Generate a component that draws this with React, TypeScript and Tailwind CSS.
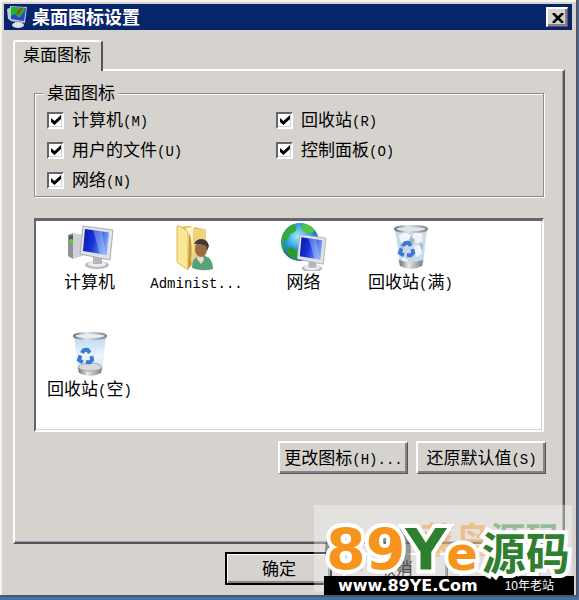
import { useState } from 'react';
import type { ReactNode } from 'react';
import clsx from 'clsx';

const raised =
  'border-t-2 border-l-2 border-r border-b border-t-white border-l-white border-r-[#55545a] border-b-[#55545a] shadow-[inset_-2px_-2px_0_#84838a] bg-[#d6d3ce]';

// Latin characters are half the width of a Chinese character
function Mixed({ text }: { text: string }) {
  return (
    <>
      {text.split(/([\x20-\x7e]+)/).map((part, i) =>
        i % 2 === 1 ? (
          <span key={i} className="text-[14px]">{part}</span>
        ) : (
          part
        )
      )}
    </>
  );
}

function Recycle() {
  return (
    <g fill="none" stroke="#3a79d6" strokeWidth="5">
      <path d="M18 23 q2 -5 7 -4 l3 4" />
      <path d="M16 26 l-2 6 5 3" />
      <path d="M30 27 l1 5 -3 3 h-5" />
    </g>
  );
}

function Monitor() {
  return (
    <g>
      <ellipse cx="31" cy="42" rx="12" ry="4" fill="#b9bbc0" />
      <ellipse cx="31" cy="41" rx="9" ry="3" fill="#eceded" />
      <path d="M27 34 l9 1 v6 h-9z" fill="#b4b6bc" />
      <path d="M17 3 L47 7 L44 37 L14 31z" fill="#dfe2e6" stroke="#a9adb5" />
      <path d="M19 6 L43 9.500 L40.500 32 L17 28z" fill="url(#screen)" />
      <path d="M27 7 L36 8.500 L40 32 L34 31z" fill="#b8d0ff" opacity=".4" />
    </g>
  );
}

function ComputerIcon() {
  return (
    <svg viewBox="0 0 48 48" className="size-12">
      <defs>
        <linearGradient id="screen" x1="0" y1="0" x2="1" y2="0.300">
          <stop offset="0" stopColor="#0712a8" />
          <stop offset=".5" stopColor="#1736d8" />
          <stop offset="1" stopColor="#7aa2f2" />
        </linearGradient>
      </defs>
      <path d="M2 12 l5 -2 v26 l-5 -3z" fill="#8d9096" />
      <path d="M7 10 l12 2 v20 l-12 4z" fill="#cfd1d5" />
      <path d="M3 13 l4 -1 v5 l-4 1z" fill="#53565c" />
      <circle cx="5" cy="18" r="2" fill="#49e21c" />
      <Monitor />
    </svg>
  );
}

function UserFolderIcon() {
  return (
    <svg viewBox="0 0 48 48" className="size-12">
      <path d="M6 4 l9 -1 17 3 v34 l-16 3z" fill="#e6bd54" />
      <path d="M13 5 l8 -1 v32 l-6 5z" fill="#fff6cf" />
      <path d="M20 6 h11 q2 0 2 2 v30 l-14 3z" fill="#f0d27c" />
      <path d="M4 4 q0 -2 2 -1 l7 4 q2 1 2 4 v36 l-10 -7 q-1 -1 -1 -3z" fill="#fae798" stroke="#dcb855" />
      <path d="M16 10 q4 7 2 33 l-3 3z" fill="#c89a35" />
      <path d="M19 45 q0 -11 8 -12 h5 q8 2 8 13 q-10 3 -21 -1z" fill="#55a37b" />
      <path d="M24 33 h6 l1 4 -3 4 -4 -5z" fill="#ead9c6" />
      <ellipse cx="28" cy="26" rx="6" ry="8" fill="#9c6a45" />
      <path d="M21 21 q2 -5 8 -5 q6 1 7 7 l-2 5 -1 -5 q-6 -3 -12 -2z" fill="#3d3a38" />
    </svg>
  );
}

function NetworkIcon() {
  return (
    <svg viewBox="0 0 48 48" className="size-12">
      <defs>
        <radialGradient id="globe" cx=".45" cy=".35" r=".65">
          <stop offset="0" stopColor="#a5eef8" />
          <stop offset=".5" stopColor="#2d9cdf" />
          <stop offset="1" stopColor="#124fae" />
        </radialGradient>
      </defs>
      <circle cx="20" cy="19" r="19" fill="url(#globe)" />
      <path d="M2 14 q3 -9 11 -13 l4 3 -2 5 -5 2 -2 5 -5 3 2 5 -1 6 q-3 -6 -2 -16z" fill="#35a936" />
      <path d="M5 27 l7 -3 6 5 -2 8 q-8 -2 -11 -10z" fill="#2c9b2c" />
      <path d="M23 1 q9 1 12 7 l-5 3 -6 -2 -3 -4z" fill="#54c43c" />
      <g transform="translate(5 9) scale(.87)">
        <Monitor />
      </g>
    </svg>
  );
}

function BinIcon({ full }: { full?: boolean }) {
  return (
    <svg viewBox="0 0 48 48" className="size-12">
      <defs>
        <linearGradient id="glass" x1="0" y1="0" x2="0" y2="1">
          <stop offset="0" stopColor="#b9d6ef" />
          <stop offset=".5" stopColor="#eaf5fd" />
          <stop offset="1" stopColor="#d3dbe3" />
        </linearGradient>
        <linearGradient id="metal">
          <stop offset="0" stopColor="#6d6f73" />
          <stop offset=".4" stopColor="#e6e7e9" />
          <stop offset="1" stopColor="#7b7d80" />
        </linearGradient>
      </defs>
      <path d="M8 6 L12 42 Q24 48 36 42 L40 6z" fill="url(#glass)" />
      {full && (
        <g>
          <path d="M9 9 l10 -4 8 2 9 -1 3 4 -3 32 -10 3 -12 -3z" fill="#c9d9e8" />
          <path d="M12 13 l6 -5 6 5 -3 7 -7 1z M27 9 l8 1 1 8 -6 3 -5 -5z M27 23 l6 -1 2 9 -6 3z M15 34 l6 3 -1 5 -5 -1z" fill="#eff5fa" />
          <path d="M24 13 l4 4 -3 5 -4 -3z M32 20 l4 1 -1 6z M13 20 l4 3 -3 4z" fill="#9fb7cf" />
        </g>
      )}
      <path d="M12 37 Q24 41 36 37 L35 43 Q24 49 13 43z" fill="url(#metal)" />
      {!full && <ellipse cx="24" cy="37" rx="11.500" ry="4" fill="#d9dadc" stroke="#a5a7aa" />}
      <ellipse cx="24" cy="6" rx="16" ry="3" fill={full ? '#dce6ee' : '#e3eff9'} stroke="url(#metal)" strokeWidth="2" />
      <g transform="translate(2 5) scale(.78)">
        <Recycle />
      </g>
    </svg>
  );
}

function TitleIcon() {
  return (
    <svg viewBox="0 0 20 24" className="h-6 w-5 shrink-0">
      <path d="M3 2 h5 v13 h-6z" fill="#9da1a8" />
      <path d="M0 4 l5 -2 v13 l-4 -1z" fill="#c8cbd0" />
      <path d="M3 1 L20 2 L18 18 L3 16z" fill="#b9c2d8" />
      <path d="M4 2 L19 3 L17 16 L4 14z" fill="#2547c8" />
      <path d="M4 2 L18 3 L17 7 L12 13 L8 9 L4 11z" fill="#1eb52c" />
      <path d="M10 9 l5 -6" stroke="#d02a2a" strokeWidth="2" />
      <path d="M8 16 h6 v4 h-6z" fill="#9a9da4" />
      <ellipse cx="11" cy="20" rx="6" ry="3" fill="#dfe0e2" />
    </svg>
  );
}

function CheckField({ label }: { label: string }) {
  const [checked, setChecked] = useState(true);

  return (
    <label className="flex h-[30px] items-center gap-2">
      <span className="grid size-[17px] place-items-center">
        <input
          type="checkbox"
          checked={checked}
          onChange={(e) => setChecked(e.target.checked)}
          className="col-start-1 row-start-1 size-[17px] appearance-none border-2 border-t-[#66656a] border-l-[#66656a] border-r-white border-b-white bg-white shadow-[inset_-1px_-1px_0_#d6d3ce]"
        />
        {checked && (
          <svg viewBox="0 0 10 10" className="pointer-events-none col-start-1 row-start-1 size-[10px]">
            <path d="M0 3 L3.500 6 L10 0 V4 L3.500 10 L0 7z" fill="#000" />
          </svg>
        )}
      </span>
      <span className="pt-1"><Mixed text={label} /></span>
    </label>
  );
}

function DialogButton({ children, framed, className }: { children: ReactNode; framed?: boolean; className?: string }) {
  return (
    <button
      type="button"
      className={clsx('flex items-center justify-center pt-1 whitespace-nowrap', raised, framed && 'outline-2 -outline-offset-1 outline-black', className)}
    >
      <span>{children}</span>
    </button>
  );
}

const items = [
  { label: '计算机', icon: <ComputerIcon /> },
  { label: 'Administ...', icon: <UserFolderIcon /> },
  { label: '网络', icon: <NetworkIcon /> },
  { label: '回收站(满)', icon: <BinIcon full /> },
  { label: '回收站(空)', icon: <BinIcon /> },
];

function Watermark() {
  return (
    <div className="pointer-events-none absolute right-0 bottom-0 h-[90px] w-[262px] font-['DejaVu_Sans','Noto_Sans_CJK_SC',sans-serif] font-bold">
      <div className="absolute top-0 left-0 h-[87px] w-[258px] bg-white/35" />
      <div className="absolute top-4 left-2 flex items-start gap-1 whitespace-nowrap opacity-50">
        <span className="text-[60px] leading-[60px] text-[#44433f]">CN</span>
        <span className="text-[35px] leading-[40px] text-[#f3a136]">菜鸟</span>
        <span className="-ml-1 text-[35px] leading-[40px] text-[#4b9a55]">源码</span>
      </div>
      <div className="absolute right-[2px] bottom-0 flex h-[19px] w-[250px] items-center justify-between bg-black pr-5 pl-[14px] text-white">
        <span className="text-[16px]">www.89YE.Com</span>
        <span className="font-['Liberation_Sans','Noto_Sans_CJK_SC',sans-serif] text-[12px] font-normal">10年老站</span>
      </div>
      <div className="absolute bottom-3 left-3 flex items-baseline leading-[56px] whitespace-nowrap [-webkit-text-stroke:8px_white] [paint-order:stroke_fill]">
        <span className="text-[57px] text-[#f7941d]">89</span>
        <span className="text-[57px] text-[#2e802e]">Y</span>
        <span className="text-[46px] text-[#f7941d]">e</span>
        <span className="pl-1 text-[44px] text-[#2e802e]">源码</span>
      </div>
    </div>
  );
}

export default function App() {
  return (
    <div className="min-h-screen bg-[#3c72b0] pr-px pb-[3px] font-['Liberation_Mono','Noto_Sans_CJK_SC',monospace] text-[17px] leading-5 text-black">
      <div className="relative border-r-2 border-b-2 border-r-[#55545a] border-b-[#55545a] bg-[#d6d3ce] p-1 pb-[11px] shadow-[inset_2px_2px_0_#f4f3f0]">
        <header className="flex h-[26px] items-center gap-[5px] bg-[#08246b] pr-1 pl-[3px] text-white">
          <TitleIcon />
          <h1 className="flex-1 pt-[3px] text-[18px] font-bold">桌面图标设置</h1>
          <button type="button" aria-label="关闭" className={clsx('flex h-5 w-[22px] items-center justify-center', raised)}>
            <svg viewBox="0 0 12 10" className="h-[10px] w-3">
              <path d="M1 0 L11 10 M11 0 L1 10" stroke="#000" strokeWidth="2.500" />
            </svg>
          </button>
        </header>

        <main className="pt-[10px] pr-[7px] pl-[9px]">
          <button
            type="button"
            className="relative -mb-[2px] block h-[31px] rounded-t-[3px] border-t-2 border-r-2 border-l-2 border-t-white border-r-[#55545a] border-l-white bg-[#d6d3ce] pr-[10px] pl-2"
          >
            桌面图标
          </button>

          <section className="border-2 border-t-white border-r-[#55545a] border-b-[#55545a] border-l-white px-[19px] pt-[10px] pb-[68px] shadow-[inset_-1px_-1px_0_#a09f9f]">
            <fieldset className="border border-[#8c8b8f] pb-px pl-3 shadow-[1px_1px_0_#fff,inset_1px_1px_0_#fff]">
              <legend className="-ml-1 h-6 bg-[#d6d3ce] px-1 pt-[2px] leading-6">桌面图标</legend>
              <div className="grid grid-cols-[229px_1fr]">
                <CheckField label="计算机(M)" />
                <CheckField label="回收站(R)" />
                <CheckField label="用户的文件(U)" />
                <CheckField label="控制面板(O)" />
                <CheckField label="网络(N)" />
              </div>
            </fieldset>

            <ul className="mt-[21px] grid h-[214px] grid-cols-[repeat(auto-fill,107px)] content-start border-t-[3px] border-r-2 border-b-2 border-l-2 border-t-[#66656a] border-r-white border-b-white border-l-[#66656a] bg-white shadow-[inset_-1px_-1px_0_#d6d3ce]">
              {items.map((item) => (
                <li key={item.label} className="flex h-[107px] flex-col items-center gap-[3px] pt-[2px] whitespace-nowrap">
                  {item.icon}
                  <span><Mixed text={item.label} /></span>
                </li>
              ))}
            </ul>

            <div className="-mr-[2px] mt-[9px] flex justify-end gap-2">
              <DialogButton className="h-[33px] w-[130px]"><Mixed text="更改图标(H)..." /></DialogButton>
              <DialogButton className="h-[33px] w-[130px]"><Mixed text="还原默认值(S)" /></DialogButton>
            </div>
          </section>

          <footer className="mt-[9px] flex justify-end gap-3">
            <DialogButton framed className="h-[31px] w-[105px]">确定</DialogButton>
            <DialogButton className="h-[31px] w-[105px]">取消</DialogButton>
            <DialogButton className="h-[31px] w-[105px] text-[#84838a]"><Mixed text="应用(A)" /></DialogButton>
          </footer>
        </main>

        <Watermark />
      </div>
    </div>
  );
}
